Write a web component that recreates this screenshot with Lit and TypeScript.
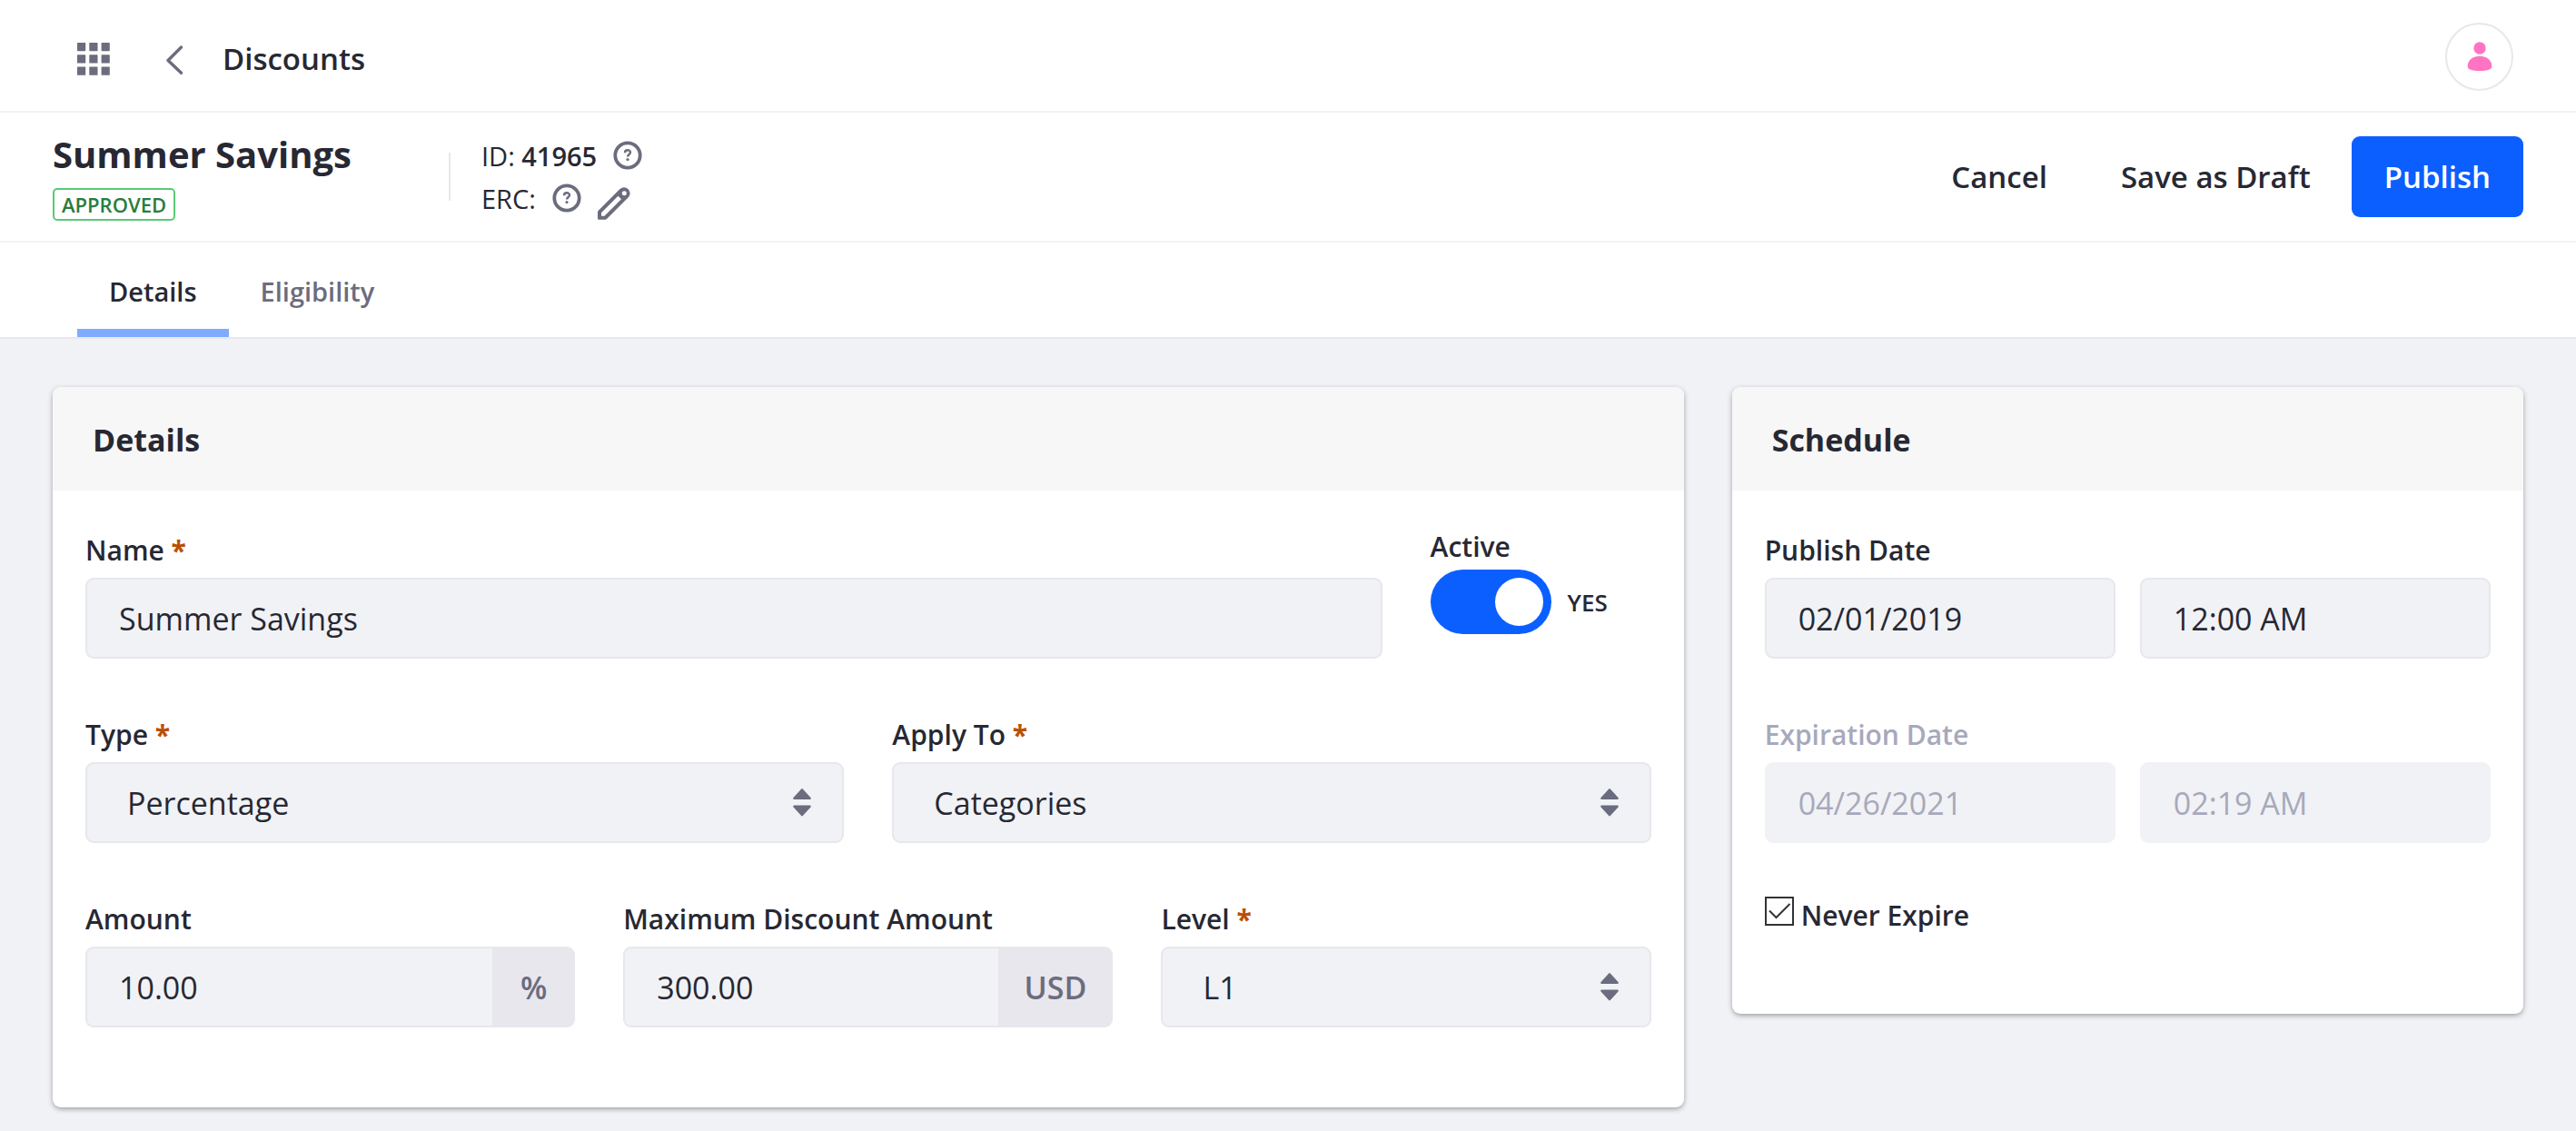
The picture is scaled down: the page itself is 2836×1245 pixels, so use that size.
import { LitElement, html, css, svg, nothing } from "lit";
import { customElement, property } from "lit/decorators.js";

const controls = css`
  * {
    box-sizing: border-box;
  }
  input,
  select,
  button {
    font: inherit;
    color: inherit;
    margin: 0;
  }
  .label {
    display: block;
    font-size: 30px;
    font-weight: 600;
    line-height: 50px;
    margin-bottom: 5px;
  }
  .required {
    color: #b95000;
    font-weight: 700;
  }
  .control {
    display: block;
    width: 100%;
    min-width: 0;
    height: 89px;
    padding: 0 35px;
    border: 2px solid #e7e7ed;
    border-radius: 9px;
    background: #f1f2f5;
    color: #272833;
    font-size: 34px;
    outline: none;
  }
  .control:focus-visible {
    border-color: #80acff;
  }
  .control:disabled {
    border-color: #f1f2f5;
    color: #a7a9bc;
    opacity: 1;
  }
`;

const star = html` <span class="required">*</span>`;

@customElement("text-field")
export class TextField extends LitElement {
  @property() label = "";
  @property() value = "";
  @property() suffix = "";
  @property({ type: Boolean }) required = false;

  static styles = [
    controls,
    css`
      :host {
        display: block;
      }
      .group {
        display: flex;
      }
      .group .control {
        flex: 1;
      }
      .with-suffix .control {
        border-radius: 9px 0 0 9px;
        border-right: 0;
      }
      .suffix {
        display: flex;
        align-items: center;
        justify-content: center;
        min-width: 91px;
        padding: 0 29px;
        border-radius: 0 9px 9px 0;
        background: #e7e7ed;
        color: #6b6c7e;
        font-size: 34px;
        font-weight: 600;
      }
    `,
  ];

  render() {
    return html`
      <label class="label" for="field">${this.label}${this.required ? star : nothing}</label>
      <div class="group ${this.suffix ? "with-suffix" : ""}">
        <input class="control" id="field" type="text" .value=${this.value} ?required=${this.required} />
        ${this.suffix ? html`<span class="suffix">${this.suffix}</span>` : nothing}
      </div>
    `;
  }
}

@customElement("select-field")
export class SelectField extends LitElement {
  @property() label = "";
  @property({ attribute: false }) options: string[] = [];

  static styles = [
    controls,
    css`
      :host {
        display: block;
      }
      .picker {
        display: grid;
        align-items: center;
      }
      .picker > * {
        grid-area: 1 / 1;
      }
      .control {
        appearance: none;
        padding: 0 72px 0 44px;
      }
      .arrows {
        justify-self: end;
        width: 20px;
        height: 32px;
        margin-right: 36px;
        fill: #6b6c7e;
        pointer-events: none;
      }
    `,
  ];

  render() {
    return html`
      <label class="label" for="field">${this.label}${star}</label>
      <div class="picker">
        <select class="control" id="field">
          ${this.options.map((o) => html`<option>${o}</option>`)}
        </select>
        <svg class="arrows" viewBox="0 0 20 32" aria-hidden="true">
          <path d="M9 .700Q10 -.5 11 .700L19.500 10Q20.500 12 18.500 12H1.500Q-.5 12 .5 10Z" />
          <path d="M9 29.800Q10 31 11 29.800L19.500 20.500Q20.500 18.500 18.500 18.500H1.500Q-.5 18.500 .5 20.500Z" />
        </svg>
      </div>
    `;
  }
}

@customElement("date-time-field")
export class DateTimeField extends LitElement {
  @property() label = "";
  @property() date = "";
  @property() time = "";
  @property({ type: Boolean }) disabled = false;

  static styles = [
    controls,
    css`
      :host {
        display: block;
      }
      .muted {
        color: #a7a9bc;
      }
      .pair {
        display: grid;
        grid-template-columns: 1fr 1fr;
        gap: 27px;
      }
    `,
  ];

  render() {
    return html`
      <label class="label ${this.disabled ? "muted" : ""}" for="date">${this.label}</label>
      <div class="pair">
        <input class="control" id="date" type="text" .value=${this.date} ?disabled=${this.disabled} />
        <input
          class="control"
          type="text"
          aria-label="${this.label} time"
          .value=${this.time}
          ?disabled=${this.disabled}
        />
      </div>
    `;
  }
}

@customElement("content-card")
export class ContentCard extends LitElement {
  @property() heading = "";

  static styles = css`
    :host {
      display: block;
      border-radius: 9px;
      background: #fff;
      box-shadow: 0 2px 6px -1px rgba(0, 0, 0, 0.45);
      overflow: hidden;
    }
    .heading {
      margin: 0;
      padding: 34px 44px 32px;
      background: #f7f7f7;
      font-size: 34px;
      font-weight: 700;
      line-height: 48px;
    }
    .body {
      padding: 41px 36px 88px;
    }
  `;

  render() {
    return html`
      <h2 class="heading">${this.heading}</h2>
      <div class="body"><slot></slot></div>
    `;
  }
}

const gridIcon = html`
  <svg width="36" height="36" viewBox="0 0 36 36" fill="currentColor" aria-hidden="true">
    ${[0, 13.3, 26.6].map((y) =>
      [0, 13.3, 26.6].map((x) => svg`<rect x=${x} y=${y} width="9.2" height="9.2" rx="0.6" />`)
    )}
  </svg>
`;

const backIcon = html`
  <svg width="20" height="34" viewBox="0 0 20 34" fill="none" stroke="currentColor" aria-hidden="true">
    <path d="M17.500 4L3 18.500L17.500 32.300" stroke-width="3.400" stroke-linecap="round" stroke-linejoin="round" />
  </svg>
`;

const userIcon = html`
  <svg width="28" height="34" viewBox="0 0 28 34" fill="#ff73c3" aria-hidden="true">
    <circle cx="14" cy="7" r="6.700" />
    <path d="M14 15.800C20.500 15.800 27.300 19.700 27.300 26.500C27.300 30.700 23 32 14 32S.7 30.700 .7 26.500C.7 19.700 7.500 15.800 14 15.800Z" />
  </svg>
`;

const helpIcon = html`
  <svg width="32" height="32" viewBox="0 0 32 32" fill="none" stroke="currentColor" aria-hidden="true">
    <circle cx="16" cy="16" r="13.700" stroke-width="3.800" />
    <path d="M13 13.200C13 9.400 19 9.400 19 12.800C19 14.900 16 15.200 16 17.600" stroke-width="2.400" />
    <circle cx="16" cy="20.600" r="1.600" fill="currentColor" stroke="none" />
  </svg>
`;

const editIcon = html`
  <svg width="36" height="36" viewBox="0 0 36 36" fill="currentColor" fill-rule="evenodd" aria-hidden="true">
    <path
      d="M0 27.500Q0 26.500 .8 25.700L24.500 2Q29 -1.500 33.500 2Q37.500 6.500 34 11L10 35Q9.300 35.700 8.300 35.700H1.200Q0 35.700 0 34.500Z
         M4 28.200V31.700H7.500L26 13.300L22.500 9.700Z
         M29.300 4.200A2.500 2.500 0 1 0 29.300 9.200A2.500 2.500 0 1 0 29.300 4.200Z"
    />
  </svg>
`;

@customElement("app-root")
export class AppRoot extends LitElement {
  static styles = [
    controls,
    css`
      :host {
        display: block;
        min-height: 100vh;
        background: #f1f2f5;
        color: #272833;
        font-family: "Open Sans", "Noto Sans", sans-serif;
      }
      svg {
        display: block;
      }
      .bar {
        display: flex;
        align-items: center;
        background: #fff;
        border-bottom: 2px solid #f1f2f5;
      }
      .icon-button {
        display: flex;
        padding: 0;
        border: 0;
        background: none;
        color: #6b6c7e;
        cursor: pointer;
      }
      .top {
        height: 124px;
        padding: 7px 69px 0 85px;
      }
      .back {
        display: flex;
        margin-left: 61px;
        color: #6b6c7e;
      }
      .page-title {
        margin: 0 auto 0 43px;
        font-size: 33px;
        font-weight: 600;
        line-height: 48px;
      }
      .avatar {
        align-items: center;
        justify-content: center;
        width: 75px;
        height: 75px;
        margin-bottom: 4px;
        border: 2px solid #e7e7ed;
        border-radius: 50%;
      }
      .toolbar {
        padding: 22px 58px;
      }
      .name {
        margin: 0 0 13px;
        font-size: 40px;
        font-weight: 700;
        line-height: 48px;
      }
      .badge {
        display: inline-block;
        padding: 0 8px;
        border: 2px solid #5aca75;
        border-radius: 5px;
        color: #287d3c;
        font-size: 22px;
        font-weight: 600;
        line-height: 32px;
        vertical-align: top;
      }
      .meta {
        display: flex;
        align-items: center;
        align-self: center;
        margin-left: 107px;
      }
      .divider {
        width: 2px;
        height: 53px;
        margin-right: 34px;
        background: #e7e7ed;
      }
      .meta-row {
        display: flex;
        align-items: center;
        gap: 18px;
        height: 47px;
        font-size: 29px;
      }
      .meta-row strong {
        font-weight: 600;
      }
      .edit {
        align-self: flex-end;
      }
      .actions {
        display: flex;
        gap: 9px;
        margin-left: auto;
      }
      .button {
        height: 89px;
        padding: 0 34px;
        border: 2px solid transparent;
        border-radius: 9px;
        background: none;
        font-size: 33px;
        font-weight: 600;
        cursor: pointer;
      }
      .primary {
        background: #0b5fff;
        color: #fff;
      }
      .tabs {
        padding: 0 85px;
        border-color: #e7e7ed;
      }
      .tab {
        padding: 30px 35px 17px;
        border-bottom: 9px solid transparent;
        color: #6b6c7e;
        font-size: 29px;
        font-weight: 600;
        line-height: 48px;
        text-decoration: none;
      }
      .tab.active {
        border-color: #80acff;
        color: #272833;
      }
      .content {
        display: grid;
        grid-template-columns: repeat(12, minmax(0, 1fr));
        align-items: start;
        gap: 53px;
        padding: 53px 58px 26px;
      }
      .details {
        grid-column: span 8;
      }
      .schedule {
        grid-column: span 4;
      }
      .form {
        display: grid;
        grid-template-columns: repeat(12, minmax(0, 1fr));
        gap: 59px 53px;
      }
      .span-10 {
        grid-column: span 10;
      }
      .span-6 {
        grid-column: span 6;
      }
      .span-4 {
        grid-column: span 4;
      }
      .span-2 {
        grid-column: span 2;
      }
      .active-label {
        line-height: 41px;
      }
      .switch {
        display: flex;
        align-items: center;
        gap: 18px;
        font-size: 26px;
        font-weight: 600;
      }
      .toggle {
        appearance: none;
        display: flex;
        flex: none;
        align-items: center;
        width: 133px;
        height: 71px;
        padding: 9px;
        border-radius: 36px;
        background: #a7a9bc;
        cursor: pointer;
      }
      .toggle::before {
        content: "";
        width: 53px;
        height: 53px;
        border-radius: 50%;
        background: #fff;
      }
      .toggle:checked {
        justify-content: flex-end;
        background: #0b5fff;
      }
      .stack {
        display: grid;
        gap: 59px;
      }
      .check {
        display: flex;
        align-items: flex-start;
        gap: 8px;
        font-size: 30px;
        font-weight: 600;
        line-height: 41px;
      }
      .checkbox {
        appearance: none;
        width: 32px;
        height: 32px;
        border: 2px solid #333;
        background: #fff;
      }
      .check-mark {
        display: grid;
      }
      .check-mark > * {
        grid-area: 1 / 1;
      }
      .check-mark svg {
        pointer-events: none;
        visibility: hidden;
      }
      .checkbox:checked + svg {
        visibility: visible;
      }
    `,
  ];

  render() {
    return html`
      <header class="bar top">
        <button class="icon-button" aria-label="Applications">${gridIcon}</button>
        <a class="back" href="#" aria-label="Back">${backIcon}</a>
        <h1 class="page-title">Discounts</h1>
        <button class="icon-button avatar" aria-label="User profile">${userIcon}</button>
      </header>

      <section class="bar toolbar">
        <div>
          <h2 class="name">Summer Savings</h2>
          <span class="badge">APPROVED</span>
        </div>
        <div class="meta">
          <div class="divider"></div>
          <div>
            <div class="meta-row">
              <span>ID: <strong>41965</strong></span>
              <button class="icon-button" aria-label="About the ID">${helpIcon}</button>
            </div>
            <div class="meta-row">
              <span>ERC:</span>
              <button class="icon-button" aria-label="About the ERC">${helpIcon}</button>
              <button class="icon-button edit" aria-label="Edit the ERC">${editIcon}</button>
            </div>
          </div>
        </div>
        <div class="actions">
          <button class="button">Cancel</button>
          <button class="button">Save as Draft</button>
          <button class="button primary">Publish</button>
        </div>
      </section>

      <nav class="bar tabs">
        <a class="tab active" href="#details" aria-current="page">Details</a>
        <a class="tab" href="#eligibility">Eligibility</a>
      </nav>

      <main class="content">
        <content-card class="details" heading="Details">
          <div class="form">
            <text-field class="span-10" label="Name" value="Summer Savings" required></text-field>
            <div class="span-2">
              <label class="label active-label" for="active">Active</label>
              <div class="switch">
                <input class="toggle" id="active" type="checkbox" role="switch" checked />
                <span>YES</span>
              </div>
            </div>
            <select-field class="span-6" label="Type" .options=${["Percentage", "Fixed Amount"]}></select-field>
            <select-field class="span-6" label="Apply To" .options=${["Categories", "Products"]}></select-field>
            <text-field class="span-4" label="Amount" value="10.00" suffix="%"></text-field>
            <text-field class="span-4" label="Maximum Discount Amount" value="300.00" suffix="USD"></text-field>
            <select-field class="span-4" label="Level" .options=${["L1", "L2", "L3", "L4"]}></select-field>
          </div>
        </content-card>

        <content-card class="schedule" heading="Schedule">
          <div class="stack">
            <date-time-field label="Publish Date" date="02/01/2019" time="12:00 AM"></date-time-field>
            <date-time-field label="Expiration Date" date="04/26/2021" time="02:19 AM" disabled></date-time-field>
            <label class="check">
              <span class="check-mark">
                <input class="checkbox" type="checkbox" checked />
                <svg width="32" height="32" viewBox="0 0 32 32" fill="none" stroke="#333" aria-hidden="true">
                  <path d="M5 15.500L12.500 23L27.500 8" stroke-width="2" />
                </svg>
              </span>
              <span>Never Expire</span>
            </label>
          </div>
        </content-card>
      </main>
    `;
  }
}
